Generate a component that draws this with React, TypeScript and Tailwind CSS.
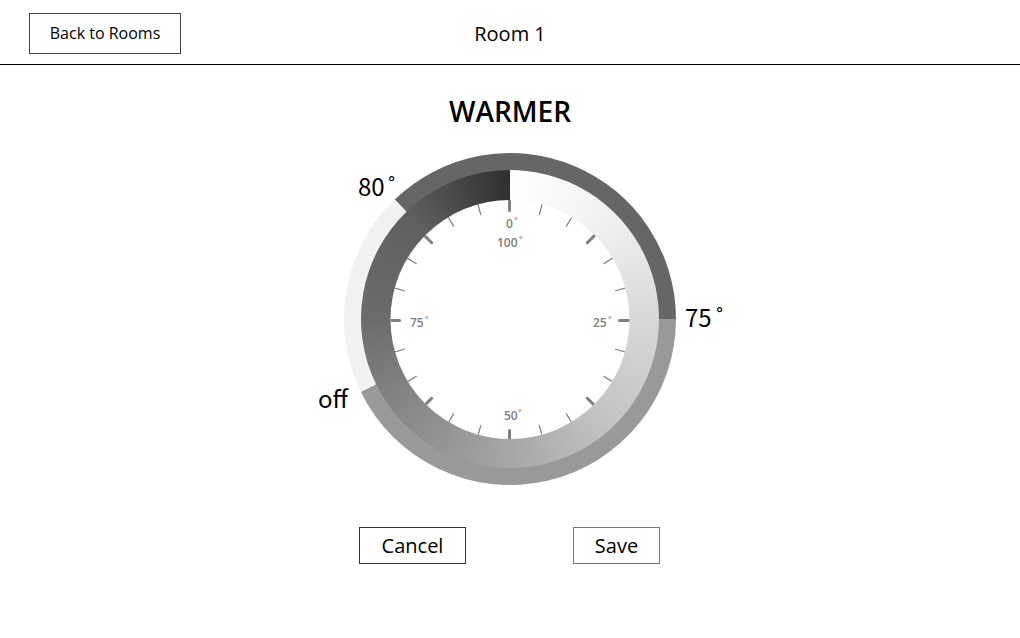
const CX = 230;
const CY = 166;

type Arc = { from: number; to: number; color: string };

const schedule: Arc[] = [
  { from: -44, to: 90, color: '#666666' },
  { from: 90, to: 244, color: '#999999' },
  { from: 244, to: 316, color: '#f1f1f1' },
];

const majorTicks = [0, 45, 90, 135, 180, 225, 270, 315];
const minorTicks = [0, 90, 180, 270].flatMap((start) => [15.5, 31, 59, 74.5].map((step) => start + step));

const scaleLabels = [
  { text: '0', x: 226, y: 75, ring: 234 },
  { text: '100', x: 217, y: 94, ring: 239 },
  { text: '25', x: 313, y: 174, ring: 328 },
  { text: '50', x: 224, y: 267, ring: 238 },
  { text: '75', x: 130, y: 174, ring: 145 },
];

function polar(angle: number, radius: number, cx = CX, cy = CY) {
  const rad = (angle * Math.PI) / 180;
  return { x: cx + radius * Math.sin(rad), y: cy - radius * Math.cos(rad) };
}

function ringPath({ from, to }: Arc, inner: number, outer: number) {
  const a = polar(from, outer);
  const b = polar(to, outer);
  const c = polar(to, inner);
  const d = polar(from, inner);
  const large = to - from > 180 ? 1 : 0;
  return `M${a.x} ${a.y}A${outer} ${outer} 0 ${large} 1 ${b.x} ${b.y}L${c.x} ${c.y}A${inner} ${inner} 0 ${large} 0 ${d.x} ${d.y}Z`;
}

function Dial() {
  return (
    <div className="grid place-items-center">
      <div className="col-start-1 row-start-1 size-[300px] rounded-full bg-[conic-gradient(#ffffff_0deg,#f0f0f0_45deg,#d8d8d8_90deg,#c4c4c4_135deg,#a6a6a6_180deg,#8a8a8a_225deg,#6c6c6c_270deg,#606060_315deg,#303030_360deg)]" />
      <svg className="z-10 col-start-1 row-start-1 block overflow-visible" width="460" height="332" viewBox="0 0 460 332">
        <defs>
          <clipPath id="face">
            <circle cx={CX} cy="166.5" r="119.5" />
          </clipPath>
        </defs>
        {schedule.map((arc) => (
          <path key={arc.from} d={ringPath(arc, 149, 166)} fill={arc.color} />
        ))}
        <circle cx={CX} cy="166.5" r="119.5" fill="#fff" />
        <g clipPath="url(#face)" stroke="#808080" strokeLinecap="round">
          {majorTicks.map((angle) => {
            const a = polar(angle, 110, 229.5, 167.5);
            const b = polar(angle, 124, 229.5, 167.5);
            return <line key={angle} x1={a.x} y1={a.y} x2={b.x} y2={b.y} strokeWidth="3" />;
          })}
          {minorTicks.map((angle) => {
            const a = polar(angle, 109.5, CX, 167);
            const b = polar(angle, 124, CX, 167);
            return <line key={angle} x1={a.x} y1={a.y} x2={b.x} y2={b.y} strokeWidth="1.2" />;
          })}
        </g>
        <g className="font-['Open_Sans',sans-serif] text-[12px] font-semibold" fill="#808080">
          {scaleLabels.map((label) => (
            <text key={label.text} x={label.x} y={label.y}>
              {label.text}
              <tspan x={label.ring} className="font-normal">
                ˚
              </tspan>
            </text>
          ))}
        </g>
        <g className="font-['Noto_Sans_CJK_JP',sans-serif] text-[24px]" fill="#000">
          <text x="78" y="43">
            80<tspan x="108" className="font-['Open_Sans',sans-serif]">˚</tspan>
          </text>
          <text x="405" y="174">
            75<tspan x="436" className="font-['Open_Sans',sans-serif]">˚</tspan>
          </text>
          <text x="38" y="255">off</text>
        </g>
      </svg>
    </div>
  );
}

export default function App() {
  return (
    <div className="min-h-screen bg-white font-['Open_Sans',sans-serif] text-black">
      <header className="grid grid-cols-[1fr_auto_1fr] items-center border-b border-black px-[29px] pt-[13px] pb-[10px]">
        <button type="button" className="h-[41px] w-[152px] justify-self-start border border-[#444] pb-0.5 text-[16px]">
          Back to Rooms
        </button>
        <h1 className="text-[20px] leading-7">Room 1</h1>
      </header>
      <main className="flex flex-col items-center pt-[26px]">
        <h2 className="text-[28px] leading-10 font-semibold">WARMER</h2>
        <div className="mt-[22px]">
          <Dial />
        </div>
        <div className="mt-[42px] flex gap-[107px] pr-px">
          <button type="button" className="h-[37px] w-[107px] border border-[#333] text-[20px] leading-7">
            Cancel
          </button>
          <button type="button" className="h-[37px] w-[87px] border border-[#777] text-[20px] leading-7">
            Save
          </button>
        </div>
      </main>
    </div>
  );
}
